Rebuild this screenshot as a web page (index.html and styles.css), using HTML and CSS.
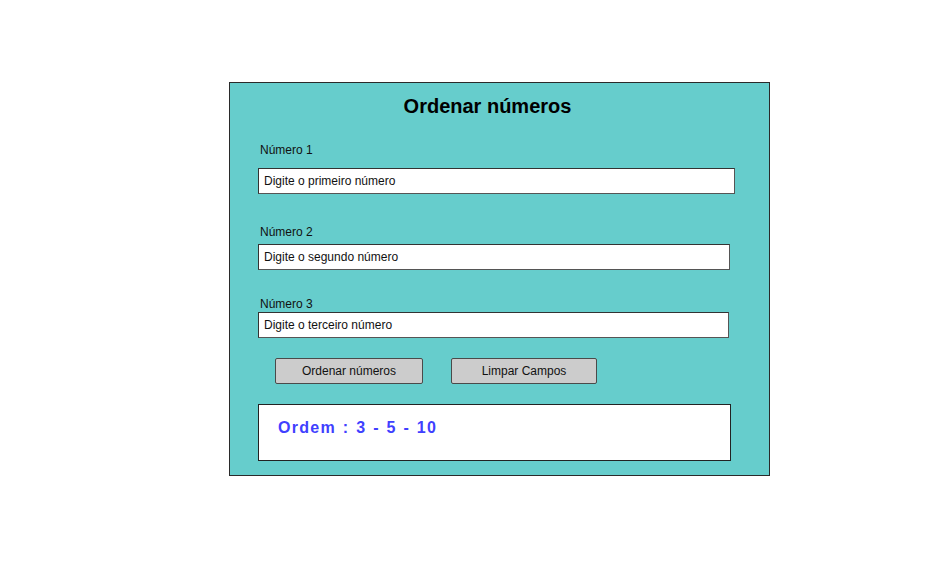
FILE: index.html
```html
<!DOCTYPE html>
<html lang="pt">
<head>
<meta charset="utf-8">
<title>Ordenar números</title>
<link rel="stylesheet" href="styles.css">
</head>
<body>
<div class="panel">
  <h1 class="title">Ordenar números</h1>
  <div class="field f1">
    <label class="label">Número 1</label>
    <div class="input w1">Digite o primeiro número</div>
  </div>
  <div class="field f2">
    <label class="label">Número 2</label>
    <div class="input w2">Digite o segundo número</div>
  </div>
  <div class="field f3">
    <label class="label">Número 3</label>
    <div class="input w3">Digite o terceiro número</div>
  </div>
  <div class="buttons">
    <div class="btn b1">Ordenar números</div>
    <div class="btn b2">Limpar Campos</div>
  </div>
  <div class="result">
    <span class="result-text">Ordem : 3 - 5 - 10</span>
  </div>
</div>
</body>
</html>
```
FILE: styles.css
```css
html, body {
  margin: 0;
  padding: 0;
  background: #ffffff;
}
body {
  font-family: "Comic Sans MS", "Liberation Sans", "DejaVu Sans", sans-serif;
  color: #111;
}
.panel {
  box-sizing: border-box;
  margin: 82px 0 0 229px;
  width: 541px;
  height: 394px;
  background: #66cdcc;
  border: 1px solid #2a2a2a;
  padding: 0 0 0 28px;
}
.title {
  margin: 11px 0 0 -28px;
  text-align: center;
  font-size: 20px;
  font-weight: bold;
  line-height: 24px;
  height: 24px;
  color: #000;
  padding-right: 24px;
}
.field {
  display: flex;
  flex-direction: column;
}
.f1 { margin-top: 25px; gap: 11px; }
.f2 { margin-top: 31px; gap: 5px; }
.f3 { margin-top: 27px; gap: 1px; }
.label {
  font-size: 12px;
  line-height: 14px;
  padding-left: 2px;
  color: #111;
}
.input {
  box-sizing: border-box;
  height: 26px;
  background: #fff;
  border: 1.5px solid #555;
  border-top-color: #333;
  border-left-color: #333;
  font-size: 12px;
  line-height: 24px;
  padding-left: 5px;
  color: #111;
}
.w1 { width: 477px; }
.w2 { width: 472px; }
.w3 { width: 471px; }
.buttons {
  display: flex;
  gap: 28px;
  margin: 20px 0 0 17px;
}
.btn {
  box-sizing: border-box;
  height: 26px;
  background: #cccccc;
  border: 1.5px solid #4a4a4a;
  border-radius: 2px;
  font-size: 12px;
  line-height: 24px;
  text-align: center;
  color: #111;
}
.b1 { width: 148px; }
.b2 { width: 146px; }
.result {
  box-sizing: border-box;
  margin-top: 20px;
  width: 473px;
  height: 57px;
  background: #fff;
  border: 1px solid #222;
  padding: 14px 0 0 19px;
}
.result-text {
  font-size: 16px;
  font-weight: bold;
  color: #4040ff;
  letter-spacing: 1.3px;
  word-spacing: 1px;
}
```
